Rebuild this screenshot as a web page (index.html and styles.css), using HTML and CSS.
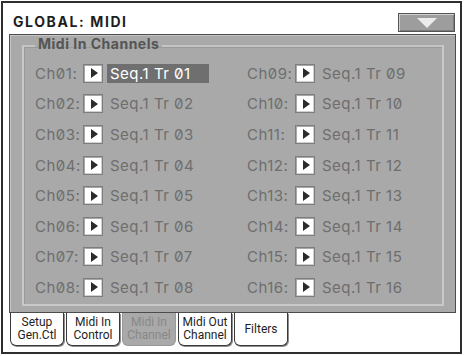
FILE: index.html
```html
<!DOCTYPE html>
<html lang="en">
<head>
    <meta charset="UTF-8">
    <title>Global: MIDI</title>
    <link rel="stylesheet" href="styles.css">
</head>
<body>
    <div class="screen">
        <div class="header">
            <div class="title">GLOBAL: MIDI</div>
            <button class="menu-btn"><span class="menu-arrow"></span></button>
        </div>
        <div class="panel">
            <fieldset class="group">
                <legend>Midi In Channels</legend>
                <div class="channels">
                    <div class="ch"><span class="ch-label">Ch01:</span><span class="ch-arrow"></span><span class="ch-value selected">Seq.1 Tr 01</span></div>
                    <div class="ch"><span class="ch-label">Ch09:</span><span class="ch-arrow"></span><span class="ch-value">Seq.1 Tr 09</span></div>
                    <div class="ch"><span class="ch-label">Ch02:</span><span class="ch-arrow"></span><span class="ch-value">Seq.1 Tr 02</span></div>
                    <div class="ch"><span class="ch-label">Ch10:</span><span class="ch-arrow"></span><span class="ch-value">Seq.1 Tr 10</span></div>
                    <div class="ch"><span class="ch-label">Ch03:</span><span class="ch-arrow"></span><span class="ch-value">Seq.1 Tr 03</span></div>
                    <div class="ch"><span class="ch-label">Ch11:</span><span class="ch-arrow"></span><span class="ch-value">Seq.1 Tr 11</span></div>
                    <div class="ch"><span class="ch-label">Ch04:</span><span class="ch-arrow"></span><span class="ch-value">Seq.1 Tr 04</span></div>
                    <div class="ch"><span class="ch-label">Ch12:</span><span class="ch-arrow"></span><span class="ch-value">Seq.1 Tr 12</span></div>
                    <div class="ch"><span class="ch-label">Ch05:</span><span class="ch-arrow"></span><span class="ch-value">Seq.1 Tr 05</span></div>
                    <div class="ch"><span class="ch-label">Ch13:</span><span class="ch-arrow"></span><span class="ch-value">Seq.1 Tr 13</span></div>
                    <div class="ch"><span class="ch-label">Ch06:</span><span class="ch-arrow"></span><span class="ch-value">Seq.1 Tr 06</span></div>
                    <div class="ch"><span class="ch-label">Ch14:</span><span class="ch-arrow"></span><span class="ch-value">Seq.1 Tr 14</span></div>
                    <div class="ch"><span class="ch-label">Ch07:</span><span class="ch-arrow"></span><span class="ch-value">Seq.1 Tr 07</span></div>
                    <div class="ch"><span class="ch-label">Ch15:</span><span class="ch-arrow"></span><span class="ch-value">Seq.1 Tr 15</span></div>
                    <div class="ch"><span class="ch-label">Ch08:</span><span class="ch-arrow"></span><span class="ch-value">Seq.1 Tr 08</span></div>
                    <div class="ch"><span class="ch-label">Ch16:</span><span class="ch-arrow"></span><span class="ch-value">Seq.1 Tr 16</span></div>
                </div>
            </fieldset>
        </div>
        <div class="tabs">
            <div class="tab">Setup<br>Gen.Ctl</div>
            <div class="tab">Midi In<br>Control</div>
            <div class="tab active">Midi In<br>Channel</div>
            <div class="tab">Midi Out<br>Channel</div>
            <div class="tab">Filters</div>
        </div>
    </div>
</body>
</html>
```

FILE: styles.css
```css
body {
    margin: 0;
    background-color: #fff;
    font-family: Inter, "DejaVu Sans", sans-serif;
    font-feature-settings: "zero" 1;
}
.screen {
    margin: 1px 0 0 1px;
    width: 461px;
    height: 353px;
    box-sizing: border-box;
    border: 2px solid #2e2e2e;
}
.header {
    height: 31px;
    display: flex;
    justify-content: space-between;
    align-items: flex-start;
    padding: 0 5px 0 10px;
}
.title {
    padding-top: 11px;
    font-size: 14px;
    line-height: 16px;
    font-weight: 700;
    letter-spacing: 1.6px;
    color: #1e1e1e;
}
.menu-btn {
    margin-top: 10px;
    width: 57px;
    height: 19px;
    padding: 0;
    border: 1px solid #555;
    background-color: #9d9d9d;
    box-shadow: inset 1px 1px 0 #cfcfcf, inset -1px -1px 0 #7c7c7c;
    display: flex;
    align-items: center;
    justify-content: center;
}
.menu-arrow {
    width: 0;
    height: 0;
    border-top: 10px solid #ececec;
    border-left: 10px solid transparent;
    border-right: 10px solid transparent;
}
.panel {
    margin-left: 6px;
    width: 447px;
    height: 279px;
    box-sizing: border-box;
    border: 1px solid #4c4c4c;
    background-color: #a9a9a9;
    box-shadow: inset 1px 1px 0 #c6c6c6;
}
.group {
    margin: 0 11px 0 12px;
    padding: 1px 0 1px 11px;
    border: 2px solid #c9c9c9;
    border-top-color: #c4c4c4;
    box-shadow: inset 1px 1px 0 #9a9a9a;
}
.group legend {
    padding: 0 3px 4px;
    font-size: 14px;
    line-height: 18px;
    font-weight: 700;
    letter-spacing: 0.5px;
    color: #555;
}
.channels {
    display: grid;
    grid-template-columns: 212px 1fr;
    grid-auto-rows: 30.6px;
}
.ch {
    display: flex;
    align-items: center;
    font-size: 15px;
    letter-spacing: 0.5px;
    color: #6e6e6e;
}
.ch-label {
    width: 48px;
}
.ch-arrow {
    width: 20px;
    height: 19px;
    box-sizing: border-box;
    border: 1px solid #7d7d7d;
    background-color: #fff;
    box-shadow: inset 1px 1px 0 #a8a8a8, inset -1px -1px 0 #d0d0d0;
    display: flex;
    align-items: center;
    justify-content: center;
}
.ch-arrow::after {
    content: "";
    width: 0;
    height: 0;
    margin-left: 2px;
    border-left: 7px solid #2b2b2b;
    border-top: 5.5px solid transparent;
    border-bottom: 5.5px solid transparent;
}
.ch-value {
    margin-left: 4px;
    padding: 0 3px;
    height: 19px;
    line-height: 19px;
}
.ch-value.selected {
    width: 96px;
    background-color: #6f6f6f;
    color: #fff;
}
.tabs {
    display: flex;
    gap: 2px;
    margin-left: 7px;
}
.tab {
    width: 54px;
    height: 33px;
    box-sizing: border-box;
    border: 1px solid #3a3a3a;
    border-top: none;
    border-radius: 0 0 6px 6px;
    box-shadow: 1px 1px 0 #8e8e8e;
    background-color: #fff;
    display: flex;
    align-items: center;
    justify-content: center;
    text-align: center;
    font-family: Roboto, sans-serif;
    font-size: 12px;
    line-height: 13px;
    color: #1e1e1e;
}
.tab.active {
    border-color: #999;
    box-shadow: none;
    background-color: #a9a9a9;
    color: #888;
}
```
